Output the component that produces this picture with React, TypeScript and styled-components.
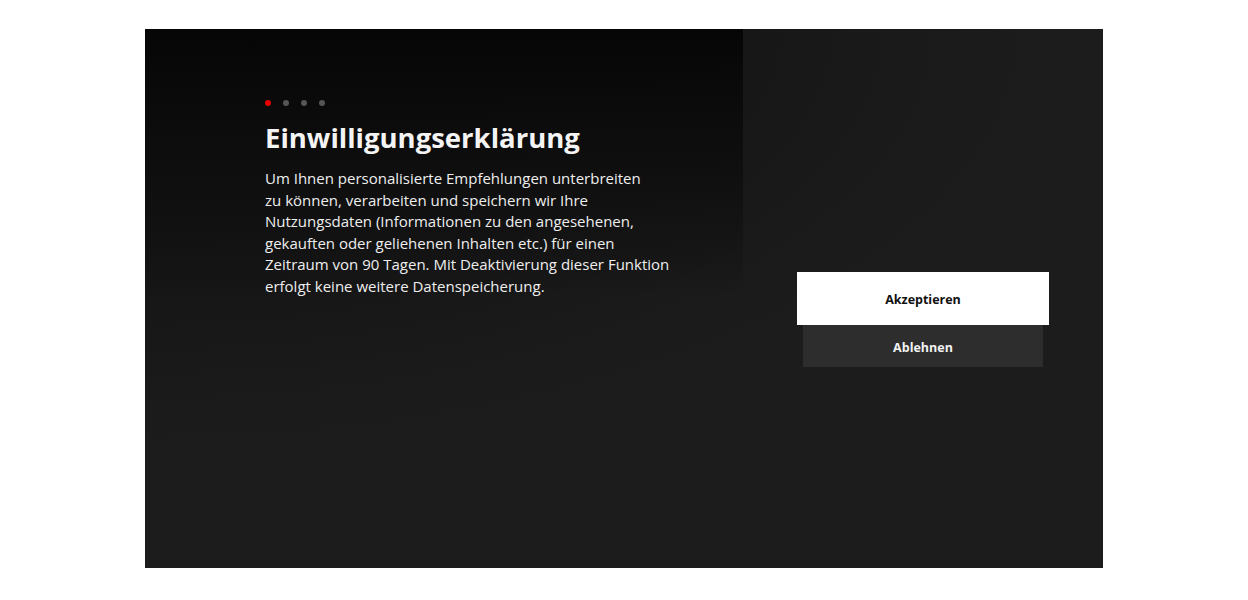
import React from "react";
import styled, { createGlobalStyle } from "styled-components";

const Global = createGlobalStyle`
  html, body { margin: 0; padding: 0; background: #ffffff; }
  body { font-family: "Open Sans", "Noto Sans", sans-serif; }
  * { box-sizing: border-box; }
`;

const Page = styled.div`
  width: 1248px;
  height: 600px;
  padding: 29px 0 0 145px;
  background: #ffffff;
`;

const Screen = styled.div`
  width: 958px;
  height: 539px;
  display: flex;
  background:
    linear-gradient(to bottom, rgba(6, 6, 6, 1) 0%, rgba(14, 14, 14, 0.85) 55%, rgba(28, 28, 28, 0) 100%) no-repeat 0 0 / 598px 268px,
    radial-gradient(ellipse 900px 420px at 0% 0%, rgba(0, 0, 0, 0.55) 0%, rgba(0, 0, 0, 0.25) 55%, rgba(0, 0, 0, 0) 100%) no-repeat,
    #1c1c1c;
`;

const InfoColumn = styled.div`
  width: 598px;
  padding: 71px 0 0 120px;
  display: flex;
  flex-direction: column;
`;

const Dots = styled.div`
  display: flex;
  gap: 12px;
`;

const Dot = styled.span<{ $active?: boolean }>`
  width: 6px;
  height: 6px;
  border-radius: 50%;
  background: ${(p) => (p.$active ? "#e60000" : "#555555")};
`;

const Title = styled.h1`
  margin: 14px 0 0;
  font-size: 27.5px;
  line-height: 36px;
  font-weight: 700;
  color: #f4f4f4;
  letter-spacing: 0;
`;

const Body = styled.p`
  margin: 12px 0 0;
  font-size: 15px;
  line-height: 21.6px;
  font-weight: 400;
  color: #eeeeee;
  white-space: nowrap;
`;

const ActionColumn = styled.div`
  flex: 1;
  display: flex;
  flex-direction: column;
  align-items: center;
  padding-top: 243px;
`;

const Button = styled.button<{ $focused?: boolean }>`
  border: none;
  margin: 0;
  padding: 2px 0 0;
  font-family: "Open Sans", "Noto Sans", sans-serif;
  font-weight: 700;
  font-size: 12.5px;
  cursor: pointer;
  width: ${(p) => (p.$focused ? "252px" : "240px")};
  height: ${(p) => (p.$focused ? "53px" : "42px")};
  background: ${(p) => (p.$focused ? "#ffffff" : "#2d2d2d")};
  color: ${(p) => (p.$focused ? "#111111" : "#f2f2f2")};
`;

const lines = [
  "Um Ihnen personalisierte Empfehlungen unterbreiten",
  "zu können, verarbeiten und speichern wir Ihre",
  "Nutzungsdaten (Informationen zu den angesehenen,",
  "gekauften oder geliehenen Inhalten etc.) für einen",
  "Zeitraum von 90 Tagen. Mit Deaktivierung dieser Funktion",
  "erfolgt keine weitere Datenspeicherung.",
];

export default function App() {
  return (
    <>
      <Global />
      <Page>
        <Screen>
          <InfoColumn>
            <Dots>
              <Dot $active />
              <Dot />
              <Dot />
              <Dot />
            </Dots>
            <Title>Einwilligungserklärung</Title>
            <Body>
              {lines.map((l, i) => (
                <React.Fragment key={i}>
                  {l}
                  {i < lines.length - 1 && <br />}
                </React.Fragment>
              ))}
            </Body>
          </InfoColumn>
          <ActionColumn>
            <Button $focused>Akzeptieren</Button>
            <Button>Ablehnen</Button>
          </ActionColumn>
        </Screen>
      </Page>
    </>
  );
}
